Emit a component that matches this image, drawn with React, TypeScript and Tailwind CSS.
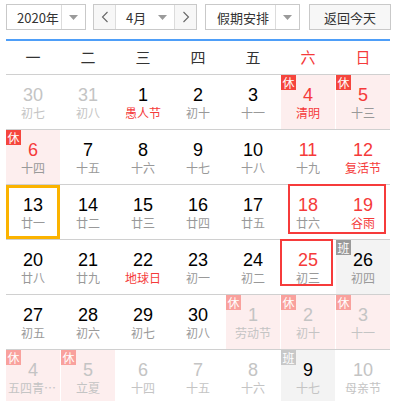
import React from "react";

type Cell = {
  d: number;
  l: string;
  kind: "prev" | "cur" | "next";
  red?: boolean;
  fest?: boolean;
  badge?: "休" | "班";
  sel?: boolean;
};

const rows: Cell[][] = [
  [
    { d: 30, l: "初七", kind: "prev" },
    { d: 31, l: "初八", kind: "prev" },
    { d: 1, l: "愚人节", kind: "cur", fest: true },
    { d: 2, l: "初十", kind: "cur" },
    { d: 3, l: "十一", kind: "cur" },
    { d: 4, l: "清明", kind: "cur", red: true, fest: true, badge: "休" },
    { d: 5, l: "十三", kind: "cur", red: true, badge: "休" },
  ],
  [
    { d: 6, l: "十四", kind: "cur", red: true, badge: "休" },
    { d: 7, l: "十五", kind: "cur" },
    { d: 8, l: "十六", kind: "cur" },
    { d: 9, l: "十七", kind: "cur" },
    { d: 10, l: "十八", kind: "cur" },
    { d: 11, l: "十九", kind: "cur", red: true },
    { d: 12, l: "复活节", kind: "cur", red: true, fest: true },
  ],
  [
    { d: 13, l: "廿一", kind: "cur", sel: true },
    { d: 14, l: "廿二", kind: "cur" },
    { d: 15, l: "廿三", kind: "cur" },
    { d: 16, l: "廿四", kind: "cur" },
    { d: 17, l: "廿五", kind: "cur" },
    { d: 18, l: "廿六", kind: "cur", red: true },
    { d: 19, l: "谷雨", kind: "cur", red: true, fest: true },
  ],
  [
    { d: 20, l: "廿八", kind: "cur" },
    { d: 21, l: "廿九", kind: "cur" },
    { d: 22, l: "地球日", kind: "cur", fest: true },
    { d: 23, l: "初一", kind: "cur" },
    { d: 24, l: "初二", kind: "cur" },
    { d: 25, l: "初三", kind: "cur", red: true },
    { d: 26, l: "初四", kind: "cur", badge: "班" },
  ],
  [
    { d: 27, l: "初五", kind: "cur" },
    { d: 28, l: "初六", kind: "cur" },
    { d: 29, l: "初七", kind: "cur" },
    { d: 30, l: "初八", kind: "cur" },
    { d: 1, l: "劳动节", kind: "next", badge: "休" },
    { d: 2, l: "初十", kind: "next", badge: "休" },
    { d: 3, l: "十一", kind: "next", badge: "休" },
  ],
  [
    { d: 4, l: "五四青年节", kind: "next", badge: "休" },
    { d: 5, l: "立夏", kind: "next", badge: "休" },
    { d: 6, l: "十四", kind: "next" },
    { d: 7, l: "十五", kind: "next" },
    { d: 8, l: "十六", kind: "next" },
    { d: 9, l: "十七", kind: "next", badge: "班" },
    { d: 10, l: "母亲节", kind: "next" },
  ],
];

const Arrow = () => (
  <svg width="9" height="5" viewBox="0 0 9 5">
    <path d="M0 0 L9 0 L4.5 5 Z" fill="#9a9a9a" />
  </svg>
);

const Chevron = ({ dir }: { dir: "l" | "r" }) => (
  <svg width="8" height="12" viewBox="0 0 8 12">
    <polyline
      points={dir === "l" ? "6.5,1 1.5,6 6.5,11" : "1.5,1 6.5,6 1.5,11"}
      fill="none"
      stroke="#666"
      strokeWidth="1.1"
    />
  </svg>
);

function DayCell({ c }: { c: Cell }) {
  const other = c.kind !== "cur";
  let bg = "";
  if (c.badge === "休") bg = "bg-[#fdeeee]";
  if (c.badge === "班") bg = "bg-[#f3f3f3]";
  let numColor = "text-black";
  if (other) numColor = "text-[#c4c4c4]";
  else if (c.red) numColor = "text-[#f53a3a]";
  if (c.badge === "班") numColor = "text-black";
  let lColor = "text-[#999]";
  if (other) lColor = "text-[#c4c4c4]";
  else if (c.fest) lColor = "text-[#f53a3a]";
  let badgeBg = "";
  if (c.badge === "休") badgeBg = other ? "bg-[#f9a19d]" : "bg-[#f5453d]";
  if (c.badge === "班") badgeBg = other ? "bg-[#c8c8c8]" : "bg-[#9a9a9a]";
  return (
    <div className={`relative h-[54px] flex flex-col items-center pt-[10px] ${bg}`}>
      {c.badge && (
        <div
          className={`absolute top-0 left-0 w-[15px] h-[15px] text-[12px] leading-[15px] text-white text-center ${badgeBg}`}
        >
          {c.badge}
        </div>
      )}
      <div className={`text-[18px] leading-[20px] font-['Liberation_Sans',Arial,sans-serif] ${numColor}`}>
        {c.d}
      </div>
      <div
        className={`text-[12px] leading-[16px] max-w-[50px] whitespace-nowrap overflow-hidden text-ellipsis ${lColor}`}
      >
        {c.l}
      </div>
      {c.sel && <div className="absolute inset-0 border-[3px] border-[#fbb300]" />}
    </div>
  );
}

export default function App() {
  const weekdays = ["一", "二", "三", "四", "五", "六", "日"];
  return (
    <div className="relative w-[398px] h-[401px] overflow-hidden bg-white pl-[6px] font-['Noto_Sans_CJK_SC','Liberation_Sans',sans-serif] text-[13px]">
      {/* toolbar */}
      <div className="flex items-center pt-[4px] h-[30px] text-[#333]">
        <div className="flex h-[26px] w-[80px] border border-[#c9c9c9]">
          <div className="flex-1 flex items-center pl-[10px] leading-none">2020年</div>
          <div className="w-[24px] border-l border-[#dcdcdc] flex items-center justify-center">
            <Arrow />
          </div>
        </div>
        <div className="ml-[7px] flex h-[26px] w-[104px] border border-[#c9c9c9]">
          <div className="w-[22px] bg-[#f7f7f7] border-r border-[#dcdcdc] flex items-center justify-center">
            <Chevron dir="l" />
          </div>
          <div className="flex-1 flex items-center justify-between pl-[10px] pr-[7px]">
            <span className="leading-none">4月</span>
            <Arrow />
          </div>
          <div className="w-[22px] bg-[#f7f7f7] border-l border-[#dcdcdc] flex items-center justify-center">
            <Chevron dir="r" />
          </div>
        </div>
        <div className="ml-[8px] flex h-[26px] w-[95px] border border-[#c9c9c9]">
          <div className="flex-1 flex items-center pl-[11px] leading-none">假期安排</div>
          <div className="w-[24px] border-l border-[#dcdcdc] flex items-center justify-center">
            <Arrow />
          </div>
        </div>
        <div className="ml-[9px] flex h-[26px] w-[82px] border border-[#c9c9c9] bg-[#f7f7f7] items-center justify-center leading-none">
          返回今天
        </div>
      </div>
      {/* blue line */}
      <div className="mt-[9px] w-[384px] h-[2px] bg-[#4e9ef8]" />
      {/* weekday header */}
      <div className="grid grid-cols-[repeat(7,54px)] gap-x-px w-[384px] h-[34px] border-b border-[#d0d0d0] text-[15px]">
        {weekdays.map((w, i) => (
          <div
            key={w}
            className={`flex items-center justify-center ${i >= 5 ? "text-[#f53a3a]" : "text-[#333]"}`}
          >
            {w}
          </div>
        ))}
      </div>
      {/* rows */}
      {rows.map((r, ri) => (
        <div
          key={ri}
          className="grid grid-cols-[repeat(7,54px)] gap-x-px w-[384px] border-b border-[#d0d0d0]"
        >
          {r.map((c, ci) => (
            <DayCell key={ci} c={c} />
          ))}
        </div>
      ))}
      {/* annotation boxes */}
      <div className="absolute left-[288px] top-[184px] w-[98px] h-[50px] border-2 border-[#f63b3b]" />
      <div className="absolute left-[280px] top-[239px] w-[53px] h-[47px] border-2 border-[#f63b3b]" />
    </div>
  );
}
